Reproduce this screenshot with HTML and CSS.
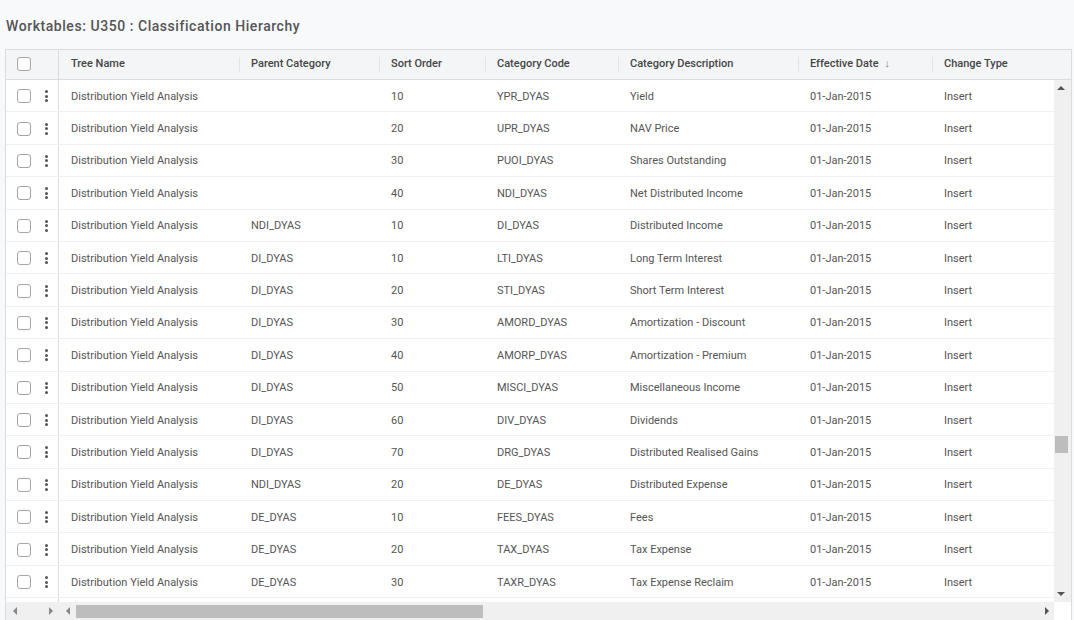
FILE: index.html
```html
<!DOCTYPE html>
<html>
<head>
<meta charset="utf-8">
<link rel="stylesheet" href="styles.css">
</head>
<body>
<h1 class="title">Worktables: U350 : Classification Hierarchy</h1>
<div class="grid">
  <div class="head">
    <div class="pin"><span class="cb"></span></div>
    <div class="hc">Tree Name</div>
    <div class="hc sep">Parent Category</div>
    <div class="hc sep">Sort Order</div>
    <div class="hc sep">Category Code</div>
    <div class="hc sep">Category Description</div>
    <div class="hc sep">Effective Date <span class="arrow">↓</span></div>
    <div class="hc sep">Change Type</div>
  </div>
  <div class="body">
    <div class="rows">
      <div class="row"><div class="pin"><span class="cb"></span><span class="kebab"><i></i><i></i><i></i></span></div><div class="c">Distribution Yield Analysis</div><div class="c"></div><div class="c">10</div><div class="c">YPR_DYAS</div><div class="c">Yield</div><div class="c">01-Jan-2015</div><div class="c">Insert</div></div>
      <div class="row"><div class="pin"><span class="cb"></span><span class="kebab"><i></i><i></i><i></i></span></div><div class="c">Distribution Yield Analysis</div><div class="c"></div><div class="c">20</div><div class="c">UPR_DYAS</div><div class="c">NAV Price</div><div class="c">01-Jan-2015</div><div class="c">Insert</div></div>
      <div class="row"><div class="pin"><span class="cb"></span><span class="kebab"><i></i><i></i><i></i></span></div><div class="c">Distribution Yield Analysis</div><div class="c"></div><div class="c">30</div><div class="c">PUOI_DYAS</div><div class="c">Shares Outstanding</div><div class="c">01-Jan-2015</div><div class="c">Insert</div></div>
      <div class="row"><div class="pin"><span class="cb"></span><span class="kebab"><i></i><i></i><i></i></span></div><div class="c">Distribution Yield Analysis</div><div class="c"></div><div class="c">40</div><div class="c">NDI_DYAS</div><div class="c">Net Distributed Income</div><div class="c">01-Jan-2015</div><div class="c">Insert</div></div>
      <div class="row"><div class="pin"><span class="cb"></span><span class="kebab"><i></i><i></i><i></i></span></div><div class="c">Distribution Yield Analysis</div><div class="c">NDI_DYAS</div><div class="c">10</div><div class="c">DI_DYAS</div><div class="c">Distributed Income</div><div class="c">01-Jan-2015</div><div class="c">Insert</div></div>
      <div class="row"><div class="pin"><span class="cb"></span><span class="kebab"><i></i><i></i><i></i></span></div><div class="c">Distribution Yield Analysis</div><div class="c">DI_DYAS</div><div class="c">10</div><div class="c">LTI_DYAS</div><div class="c">Long Term Interest</div><div class="c">01-Jan-2015</div><div class="c">Insert</div></div>
      <div class="row"><div class="pin"><span class="cb"></span><span class="kebab"><i></i><i></i><i></i></span></div><div class="c">Distribution Yield Analysis</div><div class="c">DI_DYAS</div><div class="c">20</div><div class="c">STI_DYAS</div><div class="c">Short Term Interest</div><div class="c">01-Jan-2015</div><div class="c">Insert</div></div>
      <div class="row"><div class="pin"><span class="cb"></span><span class="kebab"><i></i><i></i><i></i></span></div><div class="c">Distribution Yield Analysis</div><div class="c">DI_DYAS</div><div class="c">30</div><div class="c">AMORD_DYAS</div><div class="c">Amortization - Discount</div><div class="c">01-Jan-2015</div><div class="c">Insert</div></div>
      <div class="row"><div class="pin"><span class="cb"></span><span class="kebab"><i></i><i></i><i></i></span></div><div class="c">Distribution Yield Analysis</div><div class="c">DI_DYAS</div><div class="c">40</div><div class="c">AMORP_DYAS</div><div class="c">Amortization - Premium</div><div class="c">01-Jan-2015</div><div class="c">Insert</div></div>
      <div class="row"><div class="pin"><span class="cb"></span><span class="kebab"><i></i><i></i><i></i></span></div><div class="c">Distribution Yield Analysis</div><div class="c">DI_DYAS</div><div class="c">50</div><div class="c">MISCI_DYAS</div><div class="c">Miscellaneous Income</div><div class="c">01-Jan-2015</div><div class="c">Insert</div></div>
      <div class="row"><div class="pin"><span class="cb"></span><span class="kebab"><i></i><i></i><i></i></span></div><div class="c">Distribution Yield Analysis</div><div class="c">DI_DYAS</div><div class="c">60</div><div class="c">DIV_DYAS</div><div class="c">Dividends</div><div class="c">01-Jan-2015</div><div class="c">Insert</div></div>
      <div class="row"><div class="pin"><span class="cb"></span><span class="kebab"><i></i><i></i><i></i></span></div><div class="c">Distribution Yield Analysis</div><div class="c">DI_DYAS</div><div class="c">70</div><div class="c">DRG_DYAS</div><div class="c">Distributed Realised Gains</div><div class="c">01-Jan-2015</div><div class="c">Insert</div></div>
      <div class="row"><div class="pin"><span class="cb"></span><span class="kebab"><i></i><i></i><i></i></span></div><div class="c">Distribution Yield Analysis</div><div class="c">NDI_DYAS</div><div class="c">20</div><div class="c">DE_DYAS</div><div class="c">Distributed Expense</div><div class="c">01-Jan-2015</div><div class="c">Insert</div></div>
      <div class="row"><div class="pin"><span class="cb"></span><span class="kebab"><i></i><i></i><i></i></span></div><div class="c">Distribution Yield Analysis</div><div class="c">DE_DYAS</div><div class="c">10</div><div class="c">FEES_DYAS</div><div class="c">Fees</div><div class="c">01-Jan-2015</div><div class="c">Insert</div></div>
      <div class="row"><div class="pin"><span class="cb"></span><span class="kebab"><i></i><i></i><i></i></span></div><div class="c">Distribution Yield Analysis</div><div class="c">DE_DYAS</div><div class="c">20</div><div class="c">TAX_DYAS</div><div class="c">Tax Expense</div><div class="c">01-Jan-2015</div><div class="c">Insert</div></div>
      <div class="row"><div class="pin"><span class="cb"></span><span class="kebab"><i></i><i></i><i></i></span></div><div class="c">Distribution Yield Analysis</div><div class="c">DE_DYAS</div><div class="c">30</div><div class="c">TAXR_DYAS</div><div class="c">Tax Expense Reclaim</div><div class="c">01-Jan-2015</div><div class="c">Insert</div></div>
      <div class="row empty"><div class="pin"></div></div>
    </div>
    <div class="vbar">
      <span class="tri up"></span>
      <div class="vtrack"><span class="vthumb"></span></div>
      <span class="tri down"></span>
    </div>
  </div>
  <div class="hbar">
    <div class="hpin"><span class="tri left"></span><span class="tri right"></span></div>
    <div class="hmain">
      <span class="tri left"></span>
      <div class="htrack"><span class="hthumb"></span></div>
      <span class="tri right"></span>
    </div>
    <div class="corner"></div>
  </div>
</div>
</body>
</html>
```
FILE: styles.css
```css
* { box-sizing: border-box; }
html, body { margin: 0; padding: 0; }
body {
  background: #f8f9fb;
  font-family: Roboto, "Liberation Sans", sans-serif;
  color: #4d4d4d;
  height: 620px;
  overflow: hidden;
}
.title {
  margin: 0;
  padding: 18px 0 0 6px;
  height: 49px;
  font-size: 14px;
  font-weight: 500;
  color: #555;
  letter-spacing: 0.55px;
}
.grid {
  margin: 0 2px 0 5px;
  border: 1px solid #dcdcdc;
  border-bottom: none;
  background: #fff;
  height: 571px;
  display: flex;
  flex-direction: column;
}
.head {
  height: 30px;
  flex: none;
  display: grid;
  grid-template-columns: 53px 180px 140px 106px 133px 180px 134px 1fr;
  background: #f4f5f7;
  border-bottom: 1px solid #dcdcdc;
  font-size: 11px;
  font-weight: 500;
  color: #454545;
}
.hc {
  display: flex;
  align-items: center;
  padding-left: 12px;
  padding-bottom: 2px;
  position: relative;
  white-space: nowrap;
}
.hc.sep::before {
  content: "";
  position: absolute;
  left: 0;
  top: 7px;
  bottom: 7px;
  border-left: 1px solid #e4e4e4;
}
.arrow { margin-left: 6px; font-weight: 400; color: #888; font-size: 11px; }
.pin {
  display: flex;
  align-items: center;
  padding-left: 11px;
  border-right: 1px solid #dcdcdc;
}
.head .pin { padding-bottom: 1px; }
.cb {
  width: 14px;
  height: 14px;
  border: 1px solid #a5a5a5;
  border-radius: 3px;
  background: #fff;
  flex: none;
}
.kebab {
  display: flex;
  flex-direction: column;
  gap: 1.5px;
  margin-left: 14px;
}
.kebab i {
  display: block;
  width: 3px;
  height: 3px;
  border-radius: 50%;
  background: #555;
}
.body {
  flex: 1;
  display: flex;
  overflow: hidden;
  min-height: 0;
}
.rows {
  flex: 1;
  overflow: hidden;
}
.row {
  height: 32.4px;
  display: grid;
  grid-template-columns: 53px 180px 140px 106px 133px 180px 134px 1fr;
  border-bottom: 1px solid #f0f0f0;
  font-size: 11px;
  color: #555;
}
.row .pin { padding-top: 1px; }
.c {
  display: flex;
  align-items: center;
  padding-left: 12px;
  padding-top: 1px;
  white-space: nowrap;
  overflow: hidden;
}
.vbar {
  width: 17px;
  flex: none;
  background: #f0f0f0;
  display: flex;
  flex-direction: column;
  align-items: center;
}
.vtrack { flex: 1; width: 100%; position: relative; }
.vthumb {
  position: absolute;
  left: 1px;
  right: 3px;
  top: 340px;
  height: 17px;
  background: #bdbdbd;
}
.tri { width: 0; height: 0; display: block; flex: none; }
.tri.up { border-left: 4px solid transparent; border-right: 4px solid transparent; border-bottom: 4px solid #555; margin: 6px 3px 6px 0; }
.tri.down { border-left: 4px solid transparent; border-right: 4px solid transparent; border-top: 4px solid #555; margin: 6px 3px 6px 0; }
.tri.left { border-top: 4px solid transparent; border-bottom: 4px solid transparent; border-right: 4px solid #888; }
.tri.right { border-top: 4px solid transparent; border-bottom: 4px solid transparent; border-left: 4px solid #888; }
.hbar {
  height: 18px;
  flex: none;
  display: flex;
  background: #fff;
}
.hpin {
  width: 53px;
  background: #f0f0f0;
  display: flex;
  align-items: center;
  justify-content: space-between;
  padding: 0 5px 0 7px;
  border-right: 1px solid #f0f0f0;
}
.hmain {
  flex: 1;
  background: #f0f0f0;
  display: flex;
  align-items: center;
  padding: 0 5px 0 7px;
}
.hmain .tri.right { border-left-color: #555; }
.htrack { flex: 1; height: 12px; position: relative; margin: 0 0 0 6px; }
.hthumb {
  position: absolute;
  left: 0;
  top: 0;
  height: 13px;
  width: 407px;
  background: #bdbdbd;
}
.corner { width: 17px; background: #fff; }
```
